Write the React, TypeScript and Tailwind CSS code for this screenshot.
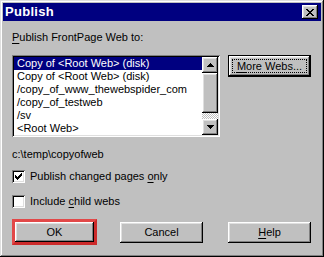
import React from "react";

const raised =
  "shadow-[inset_-1px_-1px_#000000,inset_1px_1px_#ffffff,inset_-2px_-2px_#808080,inset_2px_2px_#dfdfdf]";
const sunken =
  "shadow-[inset_1px_1px_#808080,inset_-1px_-1px_#ffffff,inset_2px_2px_#000000,inset_-2px_-2px_#dfdfdf]";

function U({ children }: { children: React.ReactNode }) {
  return <span className="underline underline-offset-[2px] decoration-1">{children}</span>;
}

function Arrow({ down }: { down?: boolean }) {
  return (
    <svg width="7" height="4" viewBox="0 0 7 4" shapeRendering="crispEdges">
      {down ? (
        <path d="M0 0h7v1H0zM1 1h5v1H1zM2 2h3v1H2zM3 3h1v1H3z" fill="#000" />
      ) : (
        <path d="M3 0h1v1H3zM2 1h3v1H2zM1 2h5v1H1zM0 3h7v1H0z" fill="#000" />
      )}
    </svg>
  );
}

export default function App() {
  const items = [
    "Copy of <Root Web> (disk)",
    "Copy of <Root Web> (disk)",
    "/copy_of_www_thewebspider_com",
    "/copy_of_testweb",
    "/sv",
    "<Root Web>",
  ];
  return (
    <div
      className={`w-[324px] h-[257px] bg-[#c0c0c0] p-[3px] flex flex-col text-[11px] leading-[13px] text-black shadow-[inset_-1px_-1px_#000000,inset_1px_1px_#dfdfdf,inset_-2px_-2px_#808080,inset_2px_2px_#ffffff]`}
      style={{ fontFamily: '"Liberation Sans", Arial, sans-serif' }}
    >
      {/* Title bar */}
      <div className="h-[18px] bg-[#000080] flex items-center justify-between pl-[2px] pr-[3px]">
        <span className="text-white font-bold text-[13px] leading-[16px] tracking-[0.3px]">Publish</span>
        <div className={`w-[16px] h-[14px] bg-[#c0c0c0] flex items-center justify-center ${raised}`}>
          <svg width="8" height="7" viewBox="0 0 8 7" shapeRendering="crispEdges">
            <path
              d="M0 0h2v1H0zM6 0h2v1H6zM1 1h2v1H1zM5 1h2v1H5zM2 2h4v1H2zM3 3h2v1H3zM2 4h4v1H2zM1 5h2v1H1zM5 5h2v1H5zM0 6h2v1H0zM6 6h2v1H6z"
              fill="#000"
            />
          </svg>
        </div>
      </div>

      {/* Body */}
      <div className="flex flex-col pl-[9px]">
        <div className="mt-[10px] h-[13px]">
          <U>P</U>ublish FrontPage Web to:
        </div>
        <div className="mt-[11px] flex items-start">
          {/* Listbox */}
          <div className={`w-[208px] h-[82px] bg-white p-[2px] flex ${sunken}`}>
            <div className="flex-1 flex flex-col">
              {items.map((t, i) => (
                <div
                  key={i}
                  className={`h-[13px] pl-[3px] whitespace-nowrap ${
                    i === 0 ? "bg-[#000080] text-white" : ""
                  }`}
                >
                  {t}
                </div>
              ))}
            </div>
            {/* Scrollbar */}
            <div className="w-[16px] flex flex-col">
              <div className={`h-[16px] bg-[#c0c0c0] flex items-center justify-center ${raised}`}>
                <Arrow />
              </div>
              <div className={`h-[40px] bg-[#c0c0c0] ${raised}`} />
              <div className="flex-1 bg-[repeating-conic-gradient(#c0c0c0_0%_25%,#ffffff_0%_50%)] bg-[length:2px_2px]" />
              <div className={`h-[16px] bg-[#c0c0c0] flex items-center justify-center ${raised}`}>
                <Arrow down />
              </div>
            </div>
          </div>
          {/* More Webs */}
          <div className="ml-[8px] w-[83px] h-[22px] border border-black">
            <div
              className={`w-full h-full bg-[#c0c0c0] p-[3px] ${raised}`}
            >
              <div className="w-full h-full border border-dotted border-black flex items-center justify-center">
                <span>
                  <U>M</U>ore Webs...
                </span>
              </div>
            </div>
          </div>
        </div>

        <div className="mt-[11px] h-[13px]">c:\temp\copyofweb</div>

        <div className="mt-[9px] flex items-center h-[13px]">
          <div className={`w-[13px] h-[13px] bg-white flex items-center justify-center ${sunken}`}>
            <svg width="7" height="7" viewBox="0 0 7 7" shapeRendering="crispEdges">
              <path
                d="M6 0h1v3H6zM5 1h1v3H5zM4 2h1v3H4zM3 3h1v3H3zM2 4h1v3H2zM1 3h1v3H1zM0 2h1v3H0z"
                fill="#000"
              />
            </svg>
          </div>
          <span className="ml-[5px]">
            Publish changed pages <U>o</U>nly
          </span>
        </div>

        <div className="mt-[12px] flex items-center h-[13px]">
          <div className={`w-[13px] h-[13px] bg-white ${sunken}`} />
          <span className="ml-[5px]">
            Include <U>c</U>hild webs
          </span>
        </div>

        <div className="mt-[11px] flex items-center">
          <div className="w-[85px] h-[26px] border-[3px] border-[#e24848] border-r-[#cc2a2a] border-b-[#cc2a2a]">
            <div className={`w-full h-full bg-[#c0c0c0] flex items-center justify-center ${raised}`}>
              OK
            </div>
          </div>
          <div className={`ml-[23px] w-[83px] h-[21px] bg-[#c0c0c0] flex items-center justify-center ${raised}`}>
            Cancel
          </div>
          <div className={`ml-[25px] w-[83px] h-[21px] bg-[#c0c0c0] flex items-center justify-center ${raised}`}>
            <span>
              <U>H</U>elp
            </span>
          </div>
        </div>
      </div>
    </div>
  );
}
